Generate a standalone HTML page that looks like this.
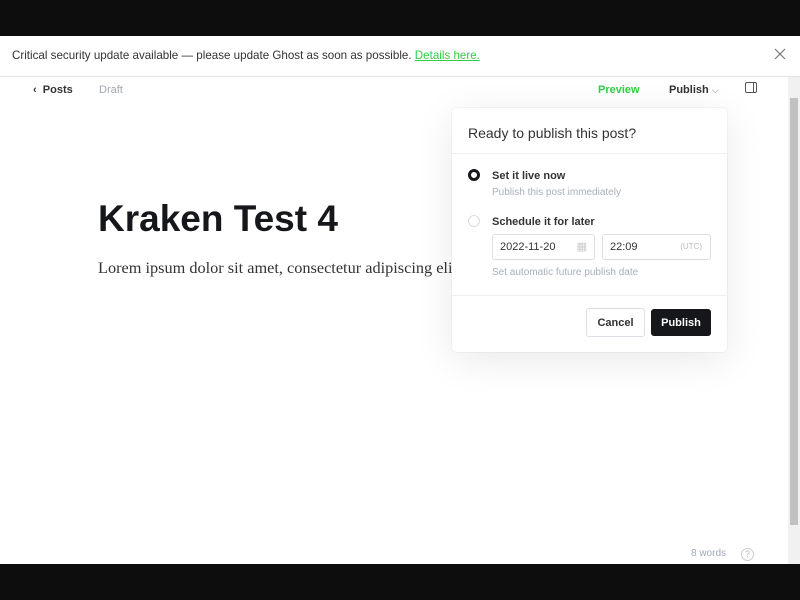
<!DOCTYPE html>
<html><head><meta charset="utf-8"><style>
*{margin:0;padding:0;box-sizing:border-box}
body{width:800px;height:600px;background:#0d0d0d;position:relative;overflow:hidden;font-family:"Liberation Sans","DejaVu Sans",sans-serif;color:#15171a}
.page{position:absolute;left:0;top:36px;width:800px;height:528px;background:#fff}
.banner{position:absolute;left:0;top:0;width:800px;height:41px;border-bottom:1px solid #e3e3e3;font-size:11.6px;color:#333}
.banner span{position:absolute;left:12px;top:13px}
.banner a{color:#30cf43;text-decoration:underline}
.x{position:absolute;left:774px;top:12px;width:12px;height:12px}
.abs{position:absolute}
.sb{position:absolute;left:788px;top:41px;width:12px;height:487px;background:#f1f1f1}
.thumb{position:absolute;left:790px;top:62px;width:8px;height:427px;background:#c1c1c1}
.pop{position:absolute;left:452px;top:72px;width:275px;height:244px;background:#fff;border-radius:4px;box-shadow:0 0 1px rgba(0,0,0,.2),0 8px 40px rgba(0,0,0,.09)}
.btn{position:absolute;border-radius:3px;font-size:11px;font-weight:bold;text-align:center}
.inp{position:absolute;height:26px;border:1px solid #dcdfe3;border-radius:3px;font-size:11px;color:#333;line-height:24px;padding-left:7px}
</style></head><body>
<div class="page">
<div class="banner"><span>Critical security update available — please update Ghost as soon as possible. <a>Details here.</a></span>
<svg class="x" viewBox="0 0 12 12"><path d="M1 1L11 11M11 1L1 11" stroke="#777" stroke-width="1.2"/></svg></div>
<div class="abs" style="left:33px;top:48px;font-size:11px;font-weight:bold;color:#333">‹&nbsp;&nbsp;Posts</div>
<div class="abs" style="left:99px;top:48px;font-size:11px;color:#a0a8b0">Draft</div>
<div class="abs" style="left:598px;top:48px;font-size:11px;font-weight:bold;color:#30cf43">Preview</div>
<div class="abs" style="left:669px;top:48px;font-size:11px;font-weight:bold;color:#333">Publish <span style="font-weight:normal;color:#777;font-size:9px">⌵</span></div>
<div class="abs" style="left:745px;top:46px;width:12px;height:11px;border:1.3px solid #555;border-radius:2px"><div style="position:absolute;right:2px;top:0;width:1.3px;height:9px;background:#555"></div></div>
<div class="abs" style="left:98px;top:162px;font-size:37px;font-weight:bold;color:#15171a">Kraken Test 4</div>
<div class="abs" style="left:98px;top:222px;font-family:'Liberation Serif',serif;font-size:16.3px;color:#333">Lorem ipsum dolor sit amet, consectetur adipiscing elit</div>
<div class="sb"></div><div class="thumb"></div>
<div class="abs" style="left:691px;top:512px;font-size:10px;color:#a0a8b8">8 words</div>
<div class="abs" style="left:741px;top:512px;width:13px;height:13px;border:1px solid #ccc;border-radius:50%;font-size:9px;color:#bbb;text-align:center;line-height:11px">?</div>
<div class="pop">
 <div class="abs" style="left:16px;top:17px;font-size:14px;color:#333">Ready to publish this post?</div>
 <div class="abs" style="left:0;top:45px;width:275px;height:1px;background:#eceef0"></div>
 <div class="abs" style="left:16px;top:61px;width:12px;height:12px;border:3px solid #15171a;border-radius:50%"></div>
 <div class="abs" style="left:40px;top:62px;font-size:11px;font-weight:bold;color:#333">Set it live now</div>
 <div class="abs" style="left:40px;top:79px;font-size:10px;color:#a8b0b8">Publish this post immediately</div>
 <div class="abs" style="left:16px;top:107px;width:12px;height:12px;border:1px solid #d8dce0;border-radius:50%"></div>
 <div class="abs" style="left:40px;top:108px;font-size:11px;font-weight:bold;color:#333">Schedule it for later</div>
 <div class="inp" style="left:40px;top:126px;width:103px">2022-11-20<span style="position:absolute;right:7px;color:#ccc">▦</span></div>
 <div class="inp" style="left:150px;top:126px;width:109px">22:09<span style="position:absolute;right:8px;color:#bbb;font-size:8px">(UTC)</span></div>
 <div class="abs" style="left:40px;top:159px;font-size:10px;color:#a8b0b8">Set automatic future publish date</div>
 <div class="abs" style="left:0;top:187px;width:275px;height:1px;background:#eceef0"></div>
 <div class="btn" style="left:134px;top:200px;width:59px;height:29px;border:1px solid #dcdfe3;color:#333;line-height:28px">Cancel</div>
 <div class="btn" style="left:199px;top:201px;width:60px;height:27px;background:#15171a;color:#fff;line-height:28px">Publish</div>
</div>
</div>
</body></html>
